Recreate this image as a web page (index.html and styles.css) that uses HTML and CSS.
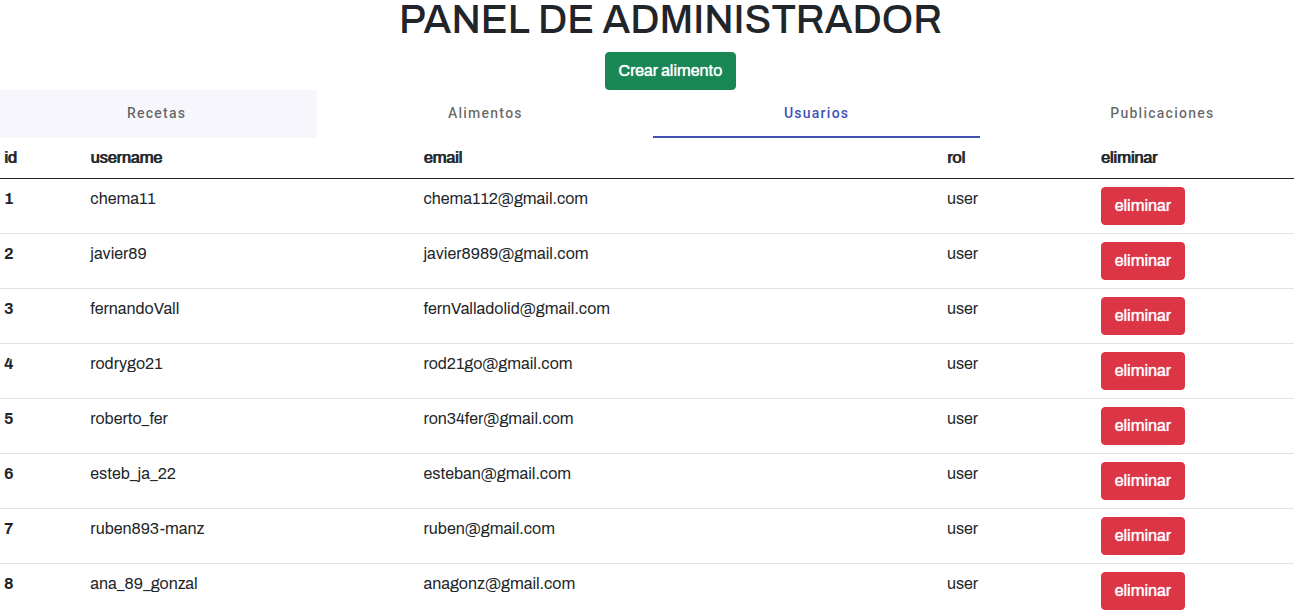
FILE: index.html
```html
<!DOCTYPE html>
<html lang="es">
<head>
<meta charset="utf-8">
<meta name="viewport" content="width=device-width, initial-scale=1">
<title>Panel de administrador</title>
<link rel="stylesheet" href="styles.css">
</head>
<body>
<main class="viewport">
<div class="page">
  <header class="header">
    <h1 class="title">PANEL DE ADMINISTRADOR</h1>
    <button type="button" class="btn btn-success">Crear alimento</button>
  </header>
  <div class="tabs" role="tablist">
    <button type="button" class="tab tab-focused" role="tab" aria-selected="false">Recetas</button>
    <button type="button" class="tab" role="tab" aria-selected="false">Alimentos</button>
    <button type="button" class="tab tab-active" role="tab" aria-selected="true">Usuarios</button>
    <button type="button" class="tab" role="tab" aria-selected="false">Publicaciones</button>
  </div>
  <table class="table">
    <colgroup><col class="col-id"><col class="col-user"><col class="col-email"><col class="col-role"><col></colgroup>
    <thead>
      <tr><th scope="col">id</th><th scope="col">username</th><th scope="col">email</th><th scope="col">rol</th><th scope="col">eliminar</th></tr>
    </thead>
    <tbody>
      <tr><th scope="row">1</th><td>chema11</td><td>chema112@gmail.com</td><td>user</td><td><button type="button" class="btn btn-danger">eliminar</button></td></tr>
      <tr><th scope="row">2</th><td>javier89</td><td>javier8989@gmail.com</td><td>user</td><td><button type="button" class="btn btn-danger">eliminar</button></td></tr>
      <tr><th scope="row">3</th><td>fernandoVall</td><td>fernValladolid@gmail.com</td><td>user</td><td><button type="button" class="btn btn-danger">eliminar</button></td></tr>
      <tr><th scope="row">4</th><td>rodrygo21</td><td>rod21go@gmail.com</td><td>user</td><td><button type="button" class="btn btn-danger">eliminar</button></td></tr>
      <tr><th scope="row">5</th><td>roberto_fer</td><td>ron34fer@gmail.com</td><td>user</td><td><button type="button" class="btn btn-danger">eliminar</button></td></tr>
      <tr><th scope="row">6</th><td>esteb_ja_22</td><td>esteban@gmail.com</td><td>user</td><td><button type="button" class="btn btn-danger">eliminar</button></td></tr>
      <tr><th scope="row">7</th><td>ruben893-manz</td><td>ruben@gmail.com</td><td>user</td><td><button type="button" class="btn btn-danger">eliminar</button></td></tr>
      <tr><th scope="row">8</th><td>ana_89_gonzal</td><td>anagonz@gmail.com</td><td>user</td><td><button type="button" class="btn btn-danger">eliminar</button></td></tr>
    </tbody>
  </table>
</div>
</main>
</body>
</html>
```

FILE: styles.css
```css
* { box-sizing: border-box; }
html { scrollbar-width: none; }
body {
  margin: 0;
  background: #fff;
  color: #212529;
  font-family: Archivo, "Liberation Sans", Arial, sans-serif;
  font-size: 16px;
  line-height: 24px;
}
.viewport { overflow: hidden; }
.page { margin: 0 -51px 0 -4px; }
.header {
  display: flex;
  flex-direction: column;
  align-items: center;
}
.title {
  margin: 0 0 12px;
  font-size: 40px;
  font-weight: 500;
  line-height: 40px;
}
.btn {
  padding: 6px 13px;
  border: 1px solid transparent;
  border-radius: 4px;
  color: #fff;
  font-family: inherit;
  font-size: 16px;
  line-height: 24px;
  text-shadow: 0 0 1px currentColor;
  cursor: pointer;
}
.btn-success { background: #198754; border-color: #198754; }
.btn-danger {
  display: block;
  background: #dc3545;
  border-color: #dc3545;
}
.tabs {
  display: grid;
  grid-template-columns: 321fr 336fr 326fr 365fr;
}
.tab {
  height: 48px;
  padding: 0 24px;
  border: 0;
  border-bottom: 2px solid transparent;
  background: none;
  color: rgba(0, 0, 0, 0.6);
  font-family: Roboto, sans-serif;
  font-size: 14px;
  font-weight: 500;
  letter-spacing: 0.09em;
  cursor: pointer;
}
.tab-focused { background: #f7f6fc; }
.tab-active { border-color: #3f51b5; color: #3f51b5; }
.table {
  width: 100%;
  table-layout: fixed;
  border-collapse: separate;
  border-spacing: 0;
}
.col-id { width: 6.4%; }
.col-user { width: 24.7%; }
.col-email { width: 38.8%; }
.col-role { width: 11.4%; }
.table th,
.table td {
  padding: 8px;
  border-bottom: 1px solid #dee2e6;
  text-align: left;
  vertical-align: top;
}
.table thead th {
  border-bottom-color: #212529;
  font-weight: 400;
  text-shadow: 1px 0 currentColor;
}
```
